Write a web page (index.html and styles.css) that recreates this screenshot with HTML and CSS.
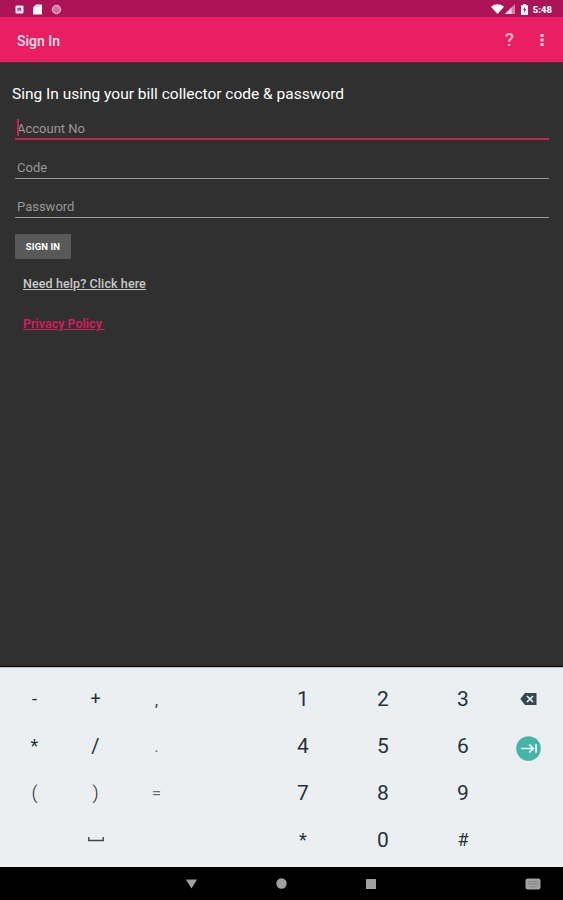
FILE: index.html
```html
<!DOCTYPE html>
<html lang="en">
<head>
    <meta charset="UTF-8">
    <meta name="viewport" content="width=device-width, initial-scale=1.0">
    <title>Sign In</title>
    <link rel="stylesheet" href="styles.css">
</head>
<body>
    <!-- Status bar -->
    <div class="status-bar">
        <div class="status-left">
            <svg width="9" height="9" viewBox="0 0 9 9"><rect x="0.5" y="0.5" width="8" height="8" rx="1" fill="#fbe9f1"/><path d="M3 6.5V3.2h2.5v1.3H4.3L6 6.4" fill="none" stroke="#8c2256" stroke-width="1"/></svg>
            <svg width="9" height="11" viewBox="0 0 9 11"><path d="M3 0.5H8.2a.8.8 0 0 1 .8.8V9.700a.8.8 0 0 1-.8.8H.8A.8.8 0 0 1 0 9.700V3.500z" fill="#fff"/><path d="M3.500 1.500v1.700M5.200 1.500v1.700M6.900 1.500v1.700" stroke="#d787ae" stroke-width=".7"/></svg>
            <svg width="11" height="11" viewBox="0 0 11 11"><circle cx="5.500" cy="5.500" r="4.300" fill="#d77fa9" stroke="#e9adc8"/><path d="M4 3.500l4 3.500M3 5.500l3 2.500" stroke="#b9417d" stroke-width=".7"/></svg>
        </div>
        <div class="status-right">
            <svg class="wifi" width="13" height="10" viewBox="0 0 13 10"><path d="M0 2.700C3.700-.6 9.300-.6 13 2.700L6.500 10z" fill="#fff"/></svg>
            <svg class="signal" width="10" height="10" viewBox="0 0 10 10"><path d="M10 0V10H0z" fill="#d880ab"/><path d="M6.500 3.500V10H0z" fill="#f8dce9"/></svg>
            <svg class="battery" width="7" height="11" viewBox="0 0 7 11"><path d="M2 0h3v1.200h2V11H0V1.200h2z" fill="#fff"/><path d="M4 2.700L2 6h1.300v3L5.200 5.300H4z" fill="#b0155b"/></svg>
            <span>5:48</span>
        </div>
    </div>

    <!-- App bar -->
    <header class="app-bar">
        <h1>Sign In</h1>
        <span class="help">?</span>
        <svg width="4" height="14" viewBox="0 0 4 14" fill="#fbdce7"><rect x=".5" y="1" width="3" height="3" rx=".5"/><rect x=".5" y="5.500" width="3" height="3" rx=".5"/><rect x=".5" y="10" width="3" height="3" rx=".5"/></svg>
    </header>

    <!-- Sign in form -->
    <main class="content">
        <h2>Sing In using your bill collector code &amp; password</h2>
        <div class="field active"><span class="cursor"></span>Account No</div>
        <div class="field">Code</div>
        <div class="field">Password</div>
        <button class="sign-in">SIGN IN</button>
        <a class="link">Need help? Click here</a>
        <a class="link privacy">Privacy Policy&nbsp;</a>
    </main>

    <!-- Number keyboard -->
    <div class="keyboard">
        <div class="keys symbols">
            <span>-</span><span>+</span><span class="light comma">,</span>
            <span>*</span><span class="tall">/</span><span class="light">.</span>
            <span class="paren">(</span><span class="paren">)</span><span class="light">=</span>
            <span></span>
            <span><svg width="16" height="5" viewBox="0 0 16 5"><path d="M.8 0V3.500H15.200V0" fill="none" stroke="#3c474d" stroke-width="1.400"/></svg></span>
            <span></span>
        </div>
        <div class="keys numbers">
            <span>1</span><span>2</span><span>3</span>
            <span>4</span><span>5</span><span>6</span>
            <span>7</span><span>8</span><span>9</span>
            <span class="small">*</span><span>0</span><span class="small">#</span>
        </div>
        <div class="keys actions">
            <span><svg width="17" height="12" viewBox="0 0 17 12"><path d="M5 0H16.500V12H5L.3 6z" fill="#37474f"/><path d="M7 3l6 6M13 3L7 9" stroke="#edf0f2" stroke-width="1.700"/></svg></span>
            <span class="next"><svg width="25" height="25" viewBox="0 0 25 25"><circle cx="12.500" cy="12.500" r="12.300" fill="#46b5a7"/><path d="M5 12.500H17M13.300 8.500l4 4-4 4M20 8.300v8.400" fill="none" stroke="#f3fffd" stroke-width="1.700"/></svg></span>
        </div>
    </div>

    <!-- Navigation bar -->
    <nav class="nav-bar">
        <span></span>
        <span><svg width="11" height="10" viewBox="0 0 11 10"><path d="M0 .5H11L5.500 9.500z" fill="#a0a0a0"/></svg></span>
        <span><svg width="11" height="11" viewBox="0 0 11 11"><circle cx="5.500" cy="5.500" r="5.200" fill="#a0a0a0"/></svg></span>
        <span><svg width="10" height="10" viewBox="0 0 10 10"><rect width="10" height="10" rx=".5" fill="#a0a0a0"/></svg></span>
        <span class="switcher"><svg width="16" height="12" viewBox="0 0 16 12"><rect x=".5" y=".5" width="15" height="11" rx="2" fill="#a0a0a0"/><path d="M3 3.500H13M3 5.800H13" stroke="#777" stroke-width="1.200" stroke-dasharray="1.300 .9"/><path d="M4.500 8.800h7" stroke="#888"/></svg></span>
    </nav>
</body>
</html>
```
FILE: styles.css
```css
* {
    box-sizing: border-box;
}

body {
    margin: 0;
    height: 900px;
    display: flex;
    flex-direction: column;
    overflow: hidden;
    background-color: #303030;
    font-family: Roboto, "Liberation Sans", sans-serif;
}

h1, h2 {
    margin: 0;
}

svg {
    display: block;
}

/* Status bar */
.status-bar {
    height: 17px;
    padding: 1px 11px 0 15px;
    display: flex;
    justify-content: space-between;
    align-items: center;
    background-color: #ad1457;
    color: #fff;
}

.status-left {
    display: flex;
    align-items: center;
    gap: 9px;
}

.status-right {
    display: flex;
    align-items: center;
    font-size: 9.5px;
    font-weight: 800;
}

.signal {
    margin-left: 1px;
}

.battery {
    margin: 0 5px 0 6px;
}

/* App bar */
.app-bar {
    height: 46px;
    padding: 1px 19px 0 17px;
    display: flex;
    align-items: center;
    background-color: #e91e63;
    border-bottom: 1px solid #64283e;
    color: #fde5ed;
}

.app-bar h1 {
    flex: 1;
    padding-top: 1px;
    font-size: 14px;
    font-weight: 500;
}

.help {
    margin-right: 26px;
    font-size: 19px;
    line-height: 20px;
    font-weight: 500;
    color: #f9b9ce;
}

/* Sign in form */
.content {
    flex: 1;
    display: flex;
    flex-direction: column;
    align-items: flex-start;
    padding: 21px 14px 0;
}

.content h2 {
    margin: 0 0 5px -2px;
    font-size: 15.5px;
    line-height: 20px;
    font-weight: 400;
    color: #fff;
    white-space: nowrap;
}

.field {
    position: relative;
    width: 534px;
    height: 31px;
    margin: -3px 0 11px 1px;
    padding-left: 2px;
    border-bottom: 1px solid #9b9b9b;
    font-size: 13px;
    line-height: 40px;
    color: #979797;
}

.field.active {
    margin-top: 0;
    border-bottom: 2px solid #c2244f;
    line-height: 39px;
}

/* Text cursor lies over the hint */
.cursor {
    position: absolute;
    left: 2px;
    top: 10px;
    width: 2px;
    height: 17px;
    background-color: #c2244f;
}

.sign-in {
    width: 56px;
    height: 25px;
    margin: 5px 0 0 1px;
    padding: 0;
    border: 0;
    border-radius: 1px;
    background-color: #59595a;
    font-family: inherit;
    font-size: 9.5px;
    font-weight: 700;
    letter-spacing: 0.1px;
    color: #fff;
}

.link {
    margin: 16px 0 0 9px;
    font-size: 12.5px;
    line-height: 18px;
    font-weight: 500;
    letter-spacing: 0.1px;
    color: #c8c8c8;
    text-decoration: underline;
}

.privacy {
    margin-top: 22px;
    font-size: 12.3px;
    font-weight: 600;
    color: #d81b60;
}

/* Number keyboard */
.keyboard {
    height: 200px;
    padding: 7px 8px 0 4px;
    display: flex;
    background-color: #eceff1;
    border-top: 1px solid #bbb;
    box-shadow: 0 -1px 1px #111;
    color: #263238;
}

.keys {
    display: grid;
    grid-auto-rows: 47px;
}

.keys span {
    display: flex;
    align-items: center;
    justify-content: center;
}

.symbols {
    grid-template-columns: repeat(3, 61px);
    font-size: 18px;
}

.numbers {
    grid-template-columns: repeat(3, 80px);
    margin-left: 76px;
    font-size: 21px;
}

.keys .light {
    font-size: 17px;
    color: #68747a;
}

.keys .comma {
    padding-top: 3px;
    color: #37444a;
}

.keys .tall {
    font-size: 20px;
}

.keys .paren {
    font-size: 19px;
    font-weight: 300;
}

.keys .small {
    font-size: 18px;
}

.actions {
    grid-template-columns: 50px;
}

.keys .next {
    padding-top: 5px;
}

/* Navigation bar */
.nav-bar {
    height: 33px;
    display: grid;
    grid-template-columns: 146px 90px 90px 90px 1fr;
    align-items: center;
    background-color: #000;
}

.nav-bar span {
    display: flex;
    justify-content: center;
}

.nav-bar .switcher {
    justify-content: flex-end;
    padding-right: 22px;
}
```
